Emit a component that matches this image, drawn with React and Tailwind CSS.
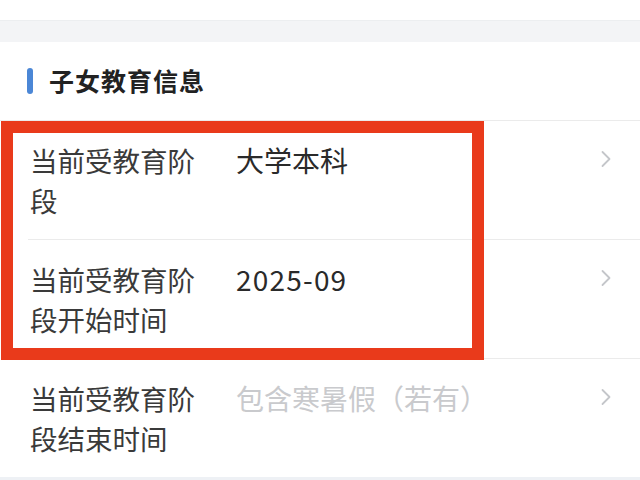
import React from 'react';

const rows = [
  { label: '当前受教育阶段', value: '大学本科' },
  { label: '当前受教育阶段开始时间', value: '2025-09', digits: true },
];

const Chevron = () => (
  <svg width="12" height="18" viewBox="0 0 12 18" fill="none" className="shrink-0 mt-[10px]">
    <path d="M2.5 2 L9.5 9 L2.5 16" stroke="#c4c6ca" strokeWidth="1.8" strokeLinecap="round" strokeLinejoin="round" />
  </svg>
);

const Row = ({ label, value, placeholder, digits, last }) => (
  <div className="pl-[28px]">
    <div className={`flex items-start pt-[19px] pb-[19px] pr-[28px] ${last ? '' : 'border-b border-[#ebebeb]'}`}>
      <div className="w-[176px] pl-[2px] text-[27.5px] leading-[40px] text-[#3a3a3a] shrink-0">{label}</div>
      <div
        className={`flex-1 ml-[32px] text-[28px] leading-[40px] ${digits ? 'tracking-[1.2px]' : ''} ${
          placeholder ? 'text-[#c9cacd]' : 'text-[#2a2a2a]'
        }`}
      >
        {value || placeholder}
      </div>
      <Chevron />
    </div>
  </div>
);

export default function App() {
  return (
    <div className="w-[640px] h-[480px] overflow-hidden bg-[#eef1f5]" style={{ fontFamily: '"Noto Sans CJK SC", "Noto Sans", sans-serif' }}>
      <div className="h-[20px] bg-white" />
      <div className="h-[22px] bg-[#f3f4f6] border-t border-[#eceef0]" />
      <div className="bg-white">
        <div className="h-[78px] flex items-center pl-[27px]">
          <div className="w-[6px] h-[26px] rounded-full bg-[#4b87d6]" />
          <div className="ml-[16px] text-[25px] font-bold text-[#222222] tracking-[1px]">子女教育信息</div>
        </div>
        <div className="relative border-t border-[#ebebeb]">
          {rows.map((r) => (
            <Row key={r.label} label={r.label} value={r.value} digits={r.digits} />
          ))}
          <div className="absolute left-[1px] top-0 w-[483px] h-[239px] border-[12px] border-[#e93a1b] pointer-events-none" />
        </div>
        <Row label="当前受教育阶段结束时间" placeholder="包含寒暑假（若有）" last />
      </div>
    </div>
  );
}
